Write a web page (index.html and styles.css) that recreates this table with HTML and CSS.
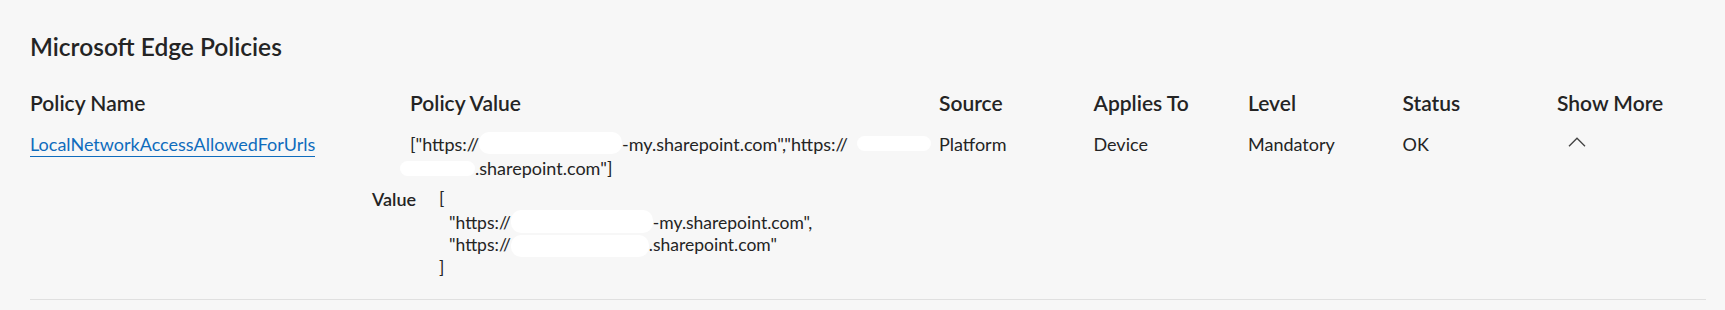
FILE: index.html
```html
<!DOCTYPE html>
<html lang="en">
<head>
<meta charset="utf-8">
<title>Microsoft Edge Policies</title>
<link rel="stylesheet" href="styles.css">
</head>
<body>
<main class="page">
  <h2 class="title">Microsoft Edge Policies</h2>
  <div class="table">
    <div class="grid head">
      <div>Policy Name</div>
      <div>Policy Value</div>
      <div>Source</div>
      <div>Applies To</div>
      <div>Level</div>
      <div>Status</div>
      <div>Show More</div>
    </div>
    <div class="policy">
      <div class="grid row">
        <div><a class="name" href="#">LocalNetworkAccessAllowedForUrls</a></div>
        <div class="value">["https://<span class="redact r1"></span>-my.sharepoint.com","https://<span class="redact r2"></span><br><span class="redact r3"></span>.sharepoint.com"]</div>
        <div>Platform</div>
        <div>Device</div>
        <div>Mandatory</div>
        <div>OK</div>
        <div><button class="toggle" aria-label="Show less"><svg width="18" height="10" viewBox="0 0 18 10"><path d="M1 9.3 L9 1.2 L17 9.3" fill="none" stroke="#424242" stroke-width="1.3"/></svg></button></div>
      </div>
      <div class="details">
        <div class="label">Value</div>
        <div class="json">[
  "https://<span class="redact r4"></span>-my.sharepoint.com",
  "https://<span class="redact r5"></span>.sharepoint.com"
]</div>
      </div>
    </div>
  </div>
</main>
</body>
</html>
```

FILE: styles.css
```css
html, body {
  margin: 0;
  padding: 0;
  background: #f7f7f7;
}

body {
  font-family: Lato, "Segoe UI", "Noto Sans", sans-serif;
  color: #242424;
}

.page {
  padding: 32px 19px 0 30px;
}

.title {
  margin: 0;
  font-size: 24.5px;
  line-height: 30px;
  font-weight: 600;
}

.table {
  margin-top: 27px;
}

.grid {
  display: grid;
  grid-template-columns: 380px 529px 154.5px 154.5px 154.5px 154.5px 1fr;
}

.head {
  font-size: 21px;
  line-height: 28px;
  font-weight: 600;
}

.policy {
  border-bottom: 1px solid #e0e0e0;
  padding-bottom: 20px;
}

.row {
  margin-top: 15px;
  font-size: 18px;
  line-height: 24px;
}

.name {
  color: #0f6cbd;
  text-decoration: none;
  border-bottom: 1px solid #0f6cbd;
  padding-bottom: 1px;
}

.value {
  padding-right: 8px;
}

.redact {
  display: inline-block;
  background: #ffffff;
  border-radius: 10px;
}

.r1 { width: 143px; height: 22px; vertical-align: -3px; }
.r2 { width: 74px; height: 15px; margin-left: 9px; vertical-align: 0; }
.r3 { width: 75px; height: 15px; margin-left: -10px; vertical-align: -1px; }
.r4 { width: 142px; height: 23px; vertical-align: -4px; }
.r5 { width: 138px; height: 22px; vertical-align: -6px; }

.toggle {
  display: flex;
  align-items: flex-start;
  margin: 0;
  padding: 5px 0 0 11px;
  height: 24px;
  border: 0;
  background: none;
  cursor: pointer;
}

.details {
  display: flex;
  gap: 23px;
  margin-top: 7.5px;
  padding-left: 342px;
  font-size: 17.5px;
  line-height: 22.3px;
}

.label {
  font-weight: 600;
  font-size: 18px;
}

.json {
  white-space: pre;
  word-spacing: 0.5px;
}
```
